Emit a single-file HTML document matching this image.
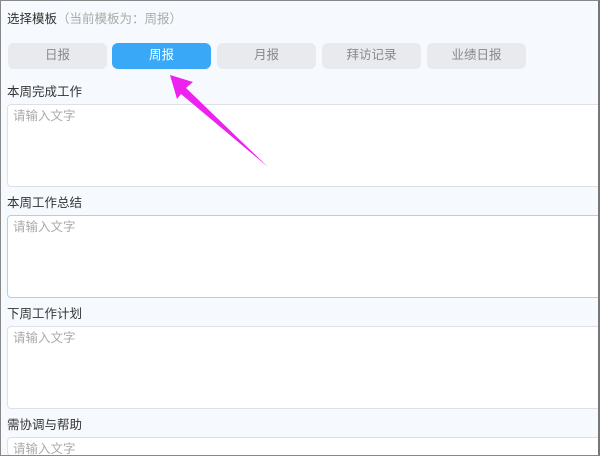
<!DOCTYPE html>
<html><head><meta charset="utf-8"><style>
*{margin:0;padding:0;box-sizing:border-box}
html,body{width:600px;height:456px;overflow:hidden}
body{background:#f6f9fd;font-family:"Liberation Sans","Noto Sans CJK SC",sans-serif;position:relative;font-size:12px;color:#333}
.frame{position:absolute;left:0;top:0;width:600px;height:456px;border:1px solid #888;border-right:2px solid #777;pointer-events:none;z-index:5}
.t{position:absolute;white-space:nowrap;line-height:16px}
.btn{position:absolute;top:43px;height:26px;width:99px;border-radius:6px;background:#e9eaee;color:#888;text-align:center;line-height:25px;font-size:12.5px}
.btn.on{background:#39a9f7;color:#fff}
.ta{position:absolute;left:7px;width:600px;background:#fff;border:1px solid #dde1e6;border-radius:4px;overflow:hidden}
.ta span{position:absolute;left:5px;top:3px;color:#aaa;font-size:12.5px;line-height:16px}
</style></head><body>
<div class="t" style="left:7px;top:11px;font-size:12.5px">选择模板<span style="color:#aaa">（当前模板为：周报）</span></div>
<div class="btn" style="left:8px">日报</div>
<div class="btn on" style="left:112px">周报</div>
<div class="btn" style="left:217px">月报</div>
<div class="btn" style="left:322px">拜访记录</div>
<div class="btn" style="left:427px">业绩日报</div>
<div class="t" style="left:7px;top:84px;font-size:12.5px">本周完成工作</div>
<div class="ta" style="top:104px;height:83px"><span>请输入文字</span></div>
<div class="t" style="left:7px;top:195px;font-size:12.5px">本周工作总结</div>
<div class="ta" style="top:215px;height:83px;border-color:#a8d5e0"><span>请输入文字</span></div>
<div class="t" style="left:7px;top:306px;font-size:12.5px">下周工作计划</div>
<div class="ta" style="top:326px;height:83px"><span>请输入文字</span></div>
<div class="t" style="left:7px;top:417px;font-size:12.5px">需协调与帮助</div>
<div class="ta" style="top:437px;height:19px"><span>请输入文字</span></div>
<svg style="position:absolute;left:0;top:0;z-index:4" width="600" height="456">
<polygon points="170,75 193,82 186,88 268,167 181,94 177,99" fill="#ee22ee"/>
</svg>
<div class="frame"></div>
</body></html>
